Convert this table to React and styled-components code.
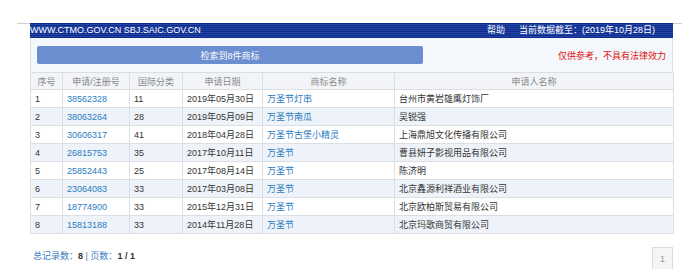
import React from "react";
import styled, { createGlobalStyle } from "styled-components";

const Global = createGlobalStyle`
  html, body { margin: 0; padding: 0; background: #fff; }
  body { font-family: "Liberation Sans", "Noto Sans CJK SC", sans-serif; font-size: 9px; color: #333; }
`;

const Page = styled.div`
  margin: 23px 0 0 17px;
  border-top: 1px solid #cfcfcf;
`;

const Main = styled.div`
  width: 643px;
  margin: -1px 0 0 13px;
`;

const TopBar = styled.div`
  height: 15px;
  display: flex;
  align-items: center;
  justify-content: space-between;
  padding: 0 18px 0 0;
  color: #fff;
  background: repeating-linear-gradient(
    to bottom,
    #0d2a8c 0px,
    #0d2a8c 1px,
    #2347a6 1px,
    #2347a6 2px
  );
  line-height: 15px;
`;

const Site = styled.span`
  font-size: 9px;
`;

const Right = styled.div`
  display: flex;
  gap: 14px;
`;

const Panel = styled.div`
  height: 34px;
  box-sizing: border-box;
  background: #f4f7fb;
  border-left: 1px solid #d9dfe7;
  border-right: 1px solid #d9dfe7;
  display: flex;
  align-items: center;
  justify-content: space-between;
  padding: 0 6px 0 6px;
`;

const ResultBar = styled.div`
  width: 386px;
  height: 18px;
  border-radius: 2px;
  background: #6a8ecf;
  color: #fff;
  display: flex;
  align-items: center;
  justify-content: center;
`;

const Notice = styled.span`
  color: #e01010;
  font-size: 9px;
`;

const Table = styled.table`
  width: 643px;
  border-collapse: collapse;
  table-layout: fixed;
  border: 1px solid #d3d9e1;
`;

const Th = styled.th`
  height: 16px;
  padding: 0;
  font-weight: normal;
  color: #8a8a8a;
  background: #f2f4f7;
  border: 1px solid #dadfe6;
  text-align: center;
`;

const Tr = styled.tr`
  background: ${(p) => (p.$alt ? "#eef3f9" : "#fff")};
`;

const Td = styled.td`
  height: 17px;
  padding: 0 4px;
  border: 1px solid #dadfe6;
  white-space: nowrap;
  overflow: hidden;
  color: ${(p) => (p.$link ? "#2b7bbf" : "#333")};
`;

const Footer = styled.div`
  display: flex;
  justify-content: space-between;
  align-items: flex-start;
  padding: 13px 0 0 3px;
`;

const Summary = styled.div`
  margin-top: 2px;
  color: #3d7ec0;
  font-size: 9px;
`;

const Num = styled.b`
  color: #333;
`;

const PageBox = styled.div`
  width: 21px;
  height: 22px;
  box-sizing: border-box;
  border: 1px solid #dcdcdc;
  border-bottom: none;
  background: #f5f5f5;
  color: #999;
  display: flex;
  align-items: center;
  justify-content: center;
`;

const rows = [
  ["1", "38562328", "11", "2019年05月30日", "万圣节灯串", "台州市黄岩雄鹰灯饰厂"],
  ["2", "38063264", "28", "2019年05月09日", "万圣节南瓜", "吴锐强"],
  ["3", "30606317", "41", "2018年04月28日", "万圣节古堡小精灵", "上海鼎旭文化传播有限公司"],
  ["4", "26815753", "35", "2017年10月11日", "万圣节", "曹县妍子影视用品有限公司"],
  ["5", "25852443", "25", "2017年08月14日", "万圣节", "陈济明"],
  ["6", "23064083", "33", "2017年03月08日", "万圣节", "北京鑫源利祥酒业有限公司"],
  ["7", "18774900", "33", "2015年12月31日", "万圣节", "北京欧柏斯贸易有限公司"],
  ["8", "15813188", "33", "2014年11月28日", "万圣节", "北京玛歌商贸有限公司"],
];

const widths = [32, 67, 53, 80, 132, 279];
const heads = ["序号", "申请/注册号", "国际分类", "申请日期", "商标名称", "申请人名称"];

export default function App() {
  return (
    <>
      <Global />
      <Page>
        <Main>
          <TopBar>
            <Site>WWW.CTMO.GOV.CN SBJ.SAIC.GOV.CN</Site>
            <Right>
              <span>帮助</span>
              <span>当前数据截至：(2019年10月28日)</span>
            </Right>
          </TopBar>
          <Panel>
            <ResultBar>检索到8件商标</ResultBar>
            <Notice>仅供参考，不具有法律效力</Notice>
          </Panel>
          <Table>
            <colgroup>
              {widths.map((w, i) => (
                <col key={i} style={{ width: w }} />
              ))}
            </colgroup>
            <thead>
              <tr>
                {heads.map((h) => (
                  <Th key={h}>{h}</Th>
                ))}
              </tr>
            </thead>
            <tbody>
              {rows.map((r, i) => (
                <Tr key={r[0]} $alt={i % 2 === 1}>
                  <Td>{r[0]}</Td>
                  <Td $link>{r[1]}</Td>
                  <Td>{r[2]}</Td>
                  <Td>{r[3]}</Td>
                  <Td $link>{r[4]}</Td>
                  <Td>{r[5]}</Td>
                </Tr>
              ))}
            </tbody>
          </Table>
          <Footer>
            <Summary>
              总记录数：<Num>8</Num> | 页数：<Num>1 / 1</Num>
            </Summary>
            <PageBox>1</PageBox>
          </Footer>
        </Main>
      </Page>
    </>
  );
}
